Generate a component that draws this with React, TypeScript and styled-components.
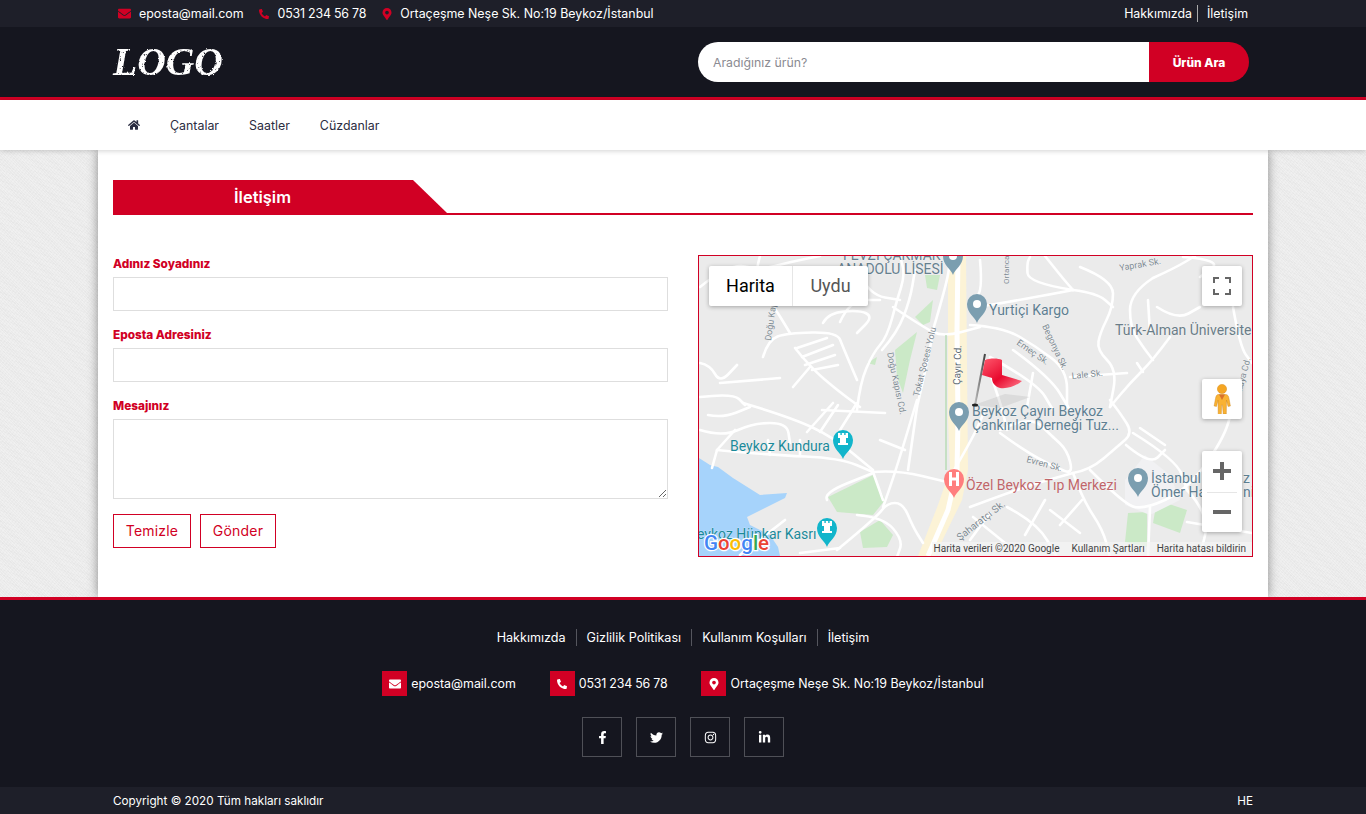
import React from "react";
import styled, { createGlobalStyle } from "styled-components";
import {
  FaEnvelope, FaPhone, FaMapMarkerAlt, FaHome, FaFacebookF, FaTwitter, FaInstagram, FaLinkedinIn,
} from "react-icons/fa";

const RED = "#d10024";
const DARK = "#15161f";
const BAR = "#1e1f29";
const FONT = `Inter, "Open Sans", "Liberation Sans", sans-serif`;

const Global = createGlobalStyle`
  * { box-sizing: border-box; }
  html, body { margin: 0; padding: 0; }
  body {
    font-family: ${FONT};
    background-color: #e9e9e9;
    background-image:
      repeating-linear-gradient(45deg, rgba(255,255,255,.22) 0 1px, transparent 1px 2px),
      repeating-linear-gradient(-52deg, rgba(255,255,255,.16) 0 1px, transparent 1px 3px),
      repeating-linear-gradient(20deg, rgba(0,0,0,.012) 0 1px, transparent 1px 5px);
  }
`;

const Wrap = styled.div`
  width: 1140px;
  margin: 0 auto;
  display: flex;
  align-items: center;
`;

const TopBar = styled.div`
  height: 27px;
  background: ${BAR};
  color: #fff;
  font-size: 12.4px;
  ${Wrap} { height: 27px; justify-content: space-between; padding: 0 5px; }
`;
const Contacts = styled.div`
  display: flex;
  align-items: center;
  gap: 15px;
`;
const Contact = styled.span<{ $gap?: number }>`
  display: flex;
  align-items: center;
  gap: ${(p) => p.$gap ?? 8}px;
  white-space: nowrap;
  svg { color: ${RED}; font-size: 12px; }
`;
const Digits = styled.span`
  letter-spacing: -0.2px;
`;
const TopLinks = styled.div`
  display: flex;
  align-items: center;
`;
const TopLink = styled.a<{ $sep?: boolean }>`
  color: #fff;
  padding: 0 ${(p) => (p.$sep ? "5px" : "0")} 0 ${(p) => (p.$sep ? "0" : "9px")};
  line-height: 17px;
  border-right: ${(p) => (p.$sep ? "1px solid #aaa" : "none")};
`;

const Header = styled.header`
  height: 73px;
  background: ${DARK};
  border-bottom: 3px solid ${RED};
  ${Wrap} { height: 70px; justify-content: space-between; padding-right: 4px; }
`;
const Logo = styled.div`
  font-family: "Liberation Serif", serif;
  font-style: italic;
  font-weight: 700;
  font-size: 39.5px;
  line-height: 1;
  color: #fff;
  filter: url(#rough);
  margin-top: 2px;
`;
const Search = styled.div`
  width: 551px;
  height: 40px;
  display: flex;
  border-radius: 20px;
  overflow: hidden;
`;
const SearchInput = styled.input`
  flex: 1;
  min-width: 0;
  border: 0;
  outline: 0;
  padding: 0 15px;
  font: 12.3px ${FONT};
  background: #fff;
  &::placeholder { color: #8b8b92; }
`;
const SearchBtn = styled.button`
  width: 100px;
  border: 0;
  background: ${RED};
  color: #fff;
  font: 800 12px ${FONT};
`;

const Nav = styled.nav`
  height: 50px;
  background: #fff;
  box-shadow: 0 1px 5px rgba(0,0,0,.18);
  position: relative;
  z-index: 2;
  ${Wrap} { height: 50px; padding-left: 15px; gap: 30px; }
`;
const NavItem = styled.a`
  font-size: 12.4px;
  color: #2b2d42;
  white-space: nowrap;
  display: flex;
  svg { font-size: 12px; color: #2b2d42; }
`;

const Main = styled.main`
  width: 1170px;
  height: 447px;
  margin: 0 auto;
  background: #fff;
  padding: 30px 15px 0;
  box-shadow: 0 0 10px rgba(0,0,0,.42);
`;
const TitleBar = styled.div`
  height: 35px;
  border-bottom: 2px solid ${RED};
  display: flex;
  margin-bottom: 40px;
`;
const Title = styled.h1`
  margin: 0 0 -2px;
  width: 334px;
  height: 35px;
  background: ${RED};
  color: #fff;
  font-size: 16.5px;
  font-weight: 600;
  line-height: 35px;
  padding-left: 121px;
  clip-path: polygon(0 0, 300px 0, 334px 33px, 334px 35px, 0 35px);
`;
const Columns = styled.div`
  display: flex;
  justify-content: space-between;
`;
const Form = styled.form`
  width: 555px;
  display: flex;
  flex-direction: column;
`;
const Label = styled.label`
  font: 800 11.8px/16px ${FONT};
  color: ${RED};
  padding-top: 1px;
  margin-bottom: 5px;
`;
const Field = styled.input`
  height: 34px;
  border: 1px solid #dedede;
  margin-bottom: 15px;
  outline: 0;
  background: #fff;
`;
const Area = styled.textarea`
  height: 80px;
  border: 1px solid #dedede;
  margin-bottom: 15px;
  outline: 0;
  resize: vertical;
  background: #fff;
`;
const Buttons = styled.div`
  display: flex;
  gap: 9px;
`;
const OutlineBtn = styled.button<{ $w: number }>`
  width: ${(p) => p.$w}px;
  height: 34px;
  border: 1px solid ${RED};
  background: #fff;
  color: ${RED};
  font: 14px ${FONT};
  letter-spacing: .2px;
  padding: 0 0 2px;
`;

const MapBox = styled.div`
  position: relative;
  width: 555px;
  height: 302px;
  border: 1px solid ${RED};
  overflow: hidden;
  background: #ebebeb;
  svg.map { display: block; }
`;
const MapType = styled.div`
  position: absolute;
  left: 10px;
  top: 10px;
  height: 40px;
  display: flex;
  background: #fff;
  border-radius: 2px;
  box-shadow: 0 1px 4px rgba(0,0,0,.3);
  font-family: Roboto, sans-serif;
  font-size: 18px;
`;
const MapTab = styled.div<{ $active?: boolean; $w: number }>`
  width: ${(p) => p.$w}px;
  display: flex;
  align-items: center;
  justify-content: center;
  padding-bottom: 2px;
  color: ${(p) => (p.$active ? "#000" : "#565656")};
  & + & { border-left: 1px solid #e6e6e6; }
`;
const MapCtl = styled.div<{ $top: number; $h?: number }>`
  position: absolute;
  left: 503px;
  top: ${(p) => p.$top}px;
  width: 40px;
  height: ${(p) => p.$h ?? 40}px;
  background: #fff;
  border-radius: 2px;
  box-shadow: 0 1px 4px rgba(0,0,0,.3);
  display: flex;
  flex-direction: column;
  align-items: center;
  justify-content: center;
`;
const ZoomHalf = styled.div`
  flex: 1;
  width: 100%;
  display: flex;
  align-items: center;
  justify-content: center;
  & + & { position: relative; }
  & + &::before {
    content: "";
    position: absolute;
    left: 5px; right: 5px; top: 0;
    height: 1px;
    background: #e6e6e6;
  }
`;
const Attribution = styled.div`
  position: absolute;
  right: 0;
  bottom: 0;
  height: 14px;
  width: 320px;
  display: flex;
  align-items: center;
  justify-content: flex-end;
  gap: 12px;
  padding-right: 6px;
  font: 10px/14px Roboto, sans-serif;
  color: #444;
  background: rgba(245,245,245,.7);
  white-space: nowrap;
`;

const Footer = styled.footer`
  height: 190px;
  background: ${DARK};
  border-top: 3px solid ${RED};
  color: #fff;
  display: flex;
  flex-direction: column;
  align-items: center;
`;
const FootLinks = styled.div`
  display: flex;
  margin-top: 29px;
  font-size: 12.6px;
`;
const FootLink = styled.a`
  padding: 0 10px;
  line-height: 17px;
  color: #fff;
  & + & { border-left: 1px solid #55565e; }
`;
const FootContacts = styled.div`
  display: flex;
  gap: 34px;
  margin-top: 25px;
  font-size: 12.4px;
`;
const FootContact = styled.div`
  display: flex;
  align-items: center;
  gap: 4px;
  white-space: nowrap;
`;
const IconSq = styled.span`
  width: 25px;
  height: 25px;
  background: ${RED};
  display: flex;
  align-items: center;
  justify-content: center;
  font-size: 12px;
`;
const Socials = styled.div`
  display: flex;
  gap: 14px;
  margin-top: 21px;
`;
const Social = styled.a`
  width: 40px;
  height: 40px;
  border: 1px solid #4f5057;
  display: flex;
  align-items: center;
  justify-content: center;
  color: #fff;
  font-size: 13px;
`;
const Copy = styled.div`
  height: 27px;
  background: ${BAR};
  color: #fff;
  font-size: 11.7px;
  ${Wrap} { height: 27px; justify-content: space-between; }
`;

const Pin = ({ x, y, c, glyph }: { x: number; y: number; c: string; glyph?: "tower" | "h" }) => (
  <g transform={`translate(${x} ${y})`}>
    <path d="M0 0C-2-6-10-10-10-19A10 10 0 1 1 10-19C10-10 2-6 0 0Z" fill={c} />
    {!glyph && <circle cx="0" cy="-19" r="4" fill="#fff" />}
    {glyph === "tower" && <path d="M-5-14h10v-2h-2v-5h2v-5h-2.4v2h-1.4v-2h-2.4v2h-1.4v-2H-5v5h2v5h-2z" fill="#fff" />}
    {glyph === "h" && <path d="M-5-26h3v5.5h4V-26h3v14H2v-5.5h-4V-12h-3z" fill="#fff" />}
  </g>
);

const ROADS: number[][] = [
  [763,357,768,340,787,333,837,332,843,347,857,380],
  [797,348,827,338],[802,357,833,345],[805,365,835,355],[812,370,838,365],
  [795,348,810,367,837,390,860,407],[793,387,810,367],
  [857,410,860,383,873,353,887,337,897,300,905,275,900,256],[882,350,897,333,910,300,915,270],
  [893,307,923,327,943,337,980,327],[933,330,947,283,950,260],[917,407,930,350,933,330],
  [700,287,730,263,760,270,790,262,820,256],[700,363,710,365,720,383,737,365],
  [720,383,757,380,780,378],[700,397,733,393,745,405],
  [823,323,828,313,860,310,873,317,857,333],[840,322,850,300,880,300],
  [760,256,752,285,770,300,790,333],[860,275,870,295,900,300],
  [1073,290,1028,283,1027,263,1030,257],[980,260,983,293,970,300],[1073,290,1020,300,977,307],
  [1073,290,1097,293,1113,307],[970,325,1003,327,1037,347,1067,370,1067,407],
  [1080,267,1113,280,1113,307,1100,333,1097,350,1117,370,1110,407],
  [1153,278,1130,293,1130,327,1143,347,1153,360],[1170,337,1153,360,1130,383,1110,407],
  [1157,307,1177,320,1200,307],[1148,300,1150,333],[1233,307,1240,347,1252,363],
  [1183,257,1223,260,1200,277],[1013,350,1050,377,1070,410],[990,357,1037,383,1053,410],
  [1033,373,1027,407],[1070,377,1127,373],[1137,363,1143,372],[1153,278,1175,268,1195,256],
  [1045,256,1060,275,1073,290],[1000,430,1030,415,1053,437],[985,360,1000,400,1007,430],
  [1000,433,1023,450,1060,470,1073,473,1067,450,1053,437],
  [1073,473,1090,470,1117,447,1133,433,1120,413,1110,400],
  [970,507,1023,487,1073,473],
  [1090,470,1123,503,1143,510,1187,490,1223,440,1233,407],
  [1133,433,1177,460,1187,490],[1073,473,1083,500,1103,530,1110,557],
  [1007,507,1037,523,1057,557],[1050,510,1080,533],[1150,507,1148,557],[1187,522,1252,533],
  [973,517,1010,547],[970,540,990,513],[1126,445,1150,465,1165,450],[1140,428,1165,445],
  [1187,490,1210,515,1200,556],[1082,500,1060,525],[1025,535,1045,500],
  [700,430,723,437,753,423,787,423,790,443],[708,415,723,418,750,407],
  [717,450,770,455,840,458,873,472],[717,450,712,468],[717,450,735,430],
  [743,403,790,417,833,437,873,470],[807,432,833,403],[820,432,838,405],[840,430,857,403],
  [822,410,885,413],[873,472,883,500],[873,472,897,470,947,482],[883,507,893,480,917,400],
  [827,500,823,493,873,473],[837,550,877,517,887,503,903,503,913,527,923,543],
  [857,515,883,517,903,540,897,557],[947,482,972,440,985,410],
  [917,407,908,470],[770,455,768,440],[800,455,800,440],[740,555,785,520],
  [800,553,840,548],[880,440,905,450],
];

const smooth = (p: number[]) => {
  if (p.length <= 4) return `M${p[0]} ${p[1]}L${p[2]} ${p[3]}`;
  let d = `M${p[0]} ${p[1]}`;
  for (let i = 2; i < p.length - 2; i += 2) {
    const mx = (p[i] + p[i + 2]) / 2;
    const my = (p[i + 1] + p[i + 3]) / 2;
    d += `Q${p[i]} ${p[i + 1]} ${mx} ${my}`;
  }
  return `${d}L${p[p.length - 2]} ${p[p.length - 1]}`;
};

const LABELS: { x: number; y: number; t: string; c: string; s: number; r?: number }[] = [
  { x: 843, y: 260, t: "FEVZİ ÇAKMAK", c: "#66808f", s: 14 },
  { x: 837, y: 274, t: "ANADOLU LİSESİ", c: "#66808f", s: 14 },
  { x: 989, y: 315, t: "Yurtiçi Kargo", c: "#5e7f92", s: 14 },
  { x: 1115, y: 335, t: "Türk-Alman Üniversite", c: "#6a7d88", s: 14 },
  { x: 972, y: 416, t: "Beykoz Çayırı Beykoz", c: "#5e7f92", s: 14 },
  { x: 972, y: 430, t: "Çankırılar Derneği Tuz...", c: "#5e7f92", s: 14 },
  { x: 730, y: 451, t: "Beykoz Kundura", c: "#1b8a9a", s: 14 },
  { x: 966, y: 490, t: "Özel Beykoz Tıp Merkezi", c: "#c0666a", s: 14 },
  { x: 1151, y: 483, t: "İstanbul", c: "#5e7f92", s: 14 },
  { x: 1151, y: 497, t: "Ömer Ha", c: "#5e7f92", s: 14 },
  { x: 1243, y: 483, t: "z", c: "#5e7f92", s: 14 },
  { x: 1243, y: 497, t: "ni", c: "#5e7f92", s: 14 },
  { x: 697, y: 539, t: "eykoz Hünkar Kasrı", c: "#1b8a9a", s: 14 },
  { x: 1120, y: 271, t: "Yaprak Sk.", c: "#7d8a92", s: 9, r: -10 },
  { x: 1016, y: 344, t: "Emeç Sk.", c: "#7d8a92", s: 9, r: 35 },
  { x: 1042, y: 326, t: "Begonya Sk.", c: "#7d8a92", s: 9, r: 65 },
  { x: 1072, y: 379, t: "Lale Sk.", c: "#7d8a92", s: 9, r: -6 },
  { x: 1026, y: 462, t: "Evren Sk.", c: "#7d8a92", s: 9, r: 15 },
  { x: 960, y: 541, t: "Şaharatçı Sk.", c: "#7d8a92", s: 10, r: -38 },
  { x: 960, y: 385, t: "Çayır Cd.", c: "#5d6a72", s: 10, r: -88 },
  { x: 919, y: 397, t: "Tokat Şosesi Yolu", c: "#7d8a92", s: 9, r: -76 },
  { x: 887, y: 353, t: "Doğu Kapısı Cd.", c: "#7d8a92", s: 9, r: 78 },
  { x: 771, y: 341, t: "Doğu Kapı", c: "#7d8a92", s: 9, r: -82 },
  { x: 1009, y: 284, t: "Ortanca", c: "#7d8a92", s: 8, r: -90 },
  { x: 1238, y: 406, t: "Çıkıkaya Cd.", c: "#7d8a92", s: 9, r: -75 },
];

const MapArt = () => (
  <svg className="map" width="553" height="300" viewBox="699 256 553 300">
    <defs>
      <linearGradient id="flag" x1="0" y1="0" x2="1" y2="1">
        <stop offset="0" stopColor="#ff5a6e" />
        <stop offset=".55" stopColor="#e8092e" />
        <stop offset="1" stopColor="#ff7d8d" />
      </linearGradient>
      <linearGradient id="pole" x1="0" y1="0" x2="1" y2="0">
        <stop offset="0" stopColor="#bbb" />
        <stop offset="1" stopColor="#444" />
      </linearGradient>
    </defs>
    <rect x="699" y="256" width="553" height="300" fill="#ebebeb" />
    <path d="M699 458L710 465L718 467L733 478L760 495L787 493L785 498L747 517L750 525L770 535L778 547L780 556H699Z" fill="#a6d3fb" />
    <g fill="#cbe9c7">
      <path d="M828 497L873 475L885 500L873 515L837 512Z" />
      <path d="M860 532L880 520L893 535L887 547L863 548Z" />
      <path d="M895 350L917 332L910 360L903 393L897 377Z" />
      <path d="M915 317L933 300L930 322L923 325Z" />
      <path d="M925 275L940 275L937 290L927 288Z" />
      <path d="M867 363L877 357L875 365Z" />
      <path d="M1128 513L1147 512L1147 547L1125 542Z" />
      <path d="M1157 500L1187 510L1180 533L1153 523Z" />
    </g>
    <path d="M948 256H966L968 470L962 500L945 535L935 556H918L938 505L950 470L948 420Z" fill="#fcf3d6" />
    <path d="M1125 480L1145 455L1170 475L1180 500L1150 515L1125 505Z" fill="#f1f1f3" />
    <g fill="none" stroke="#fff" strokeWidth="2.6" strokeLinecap="round" strokeLinejoin="round">
      {ROADS.map((p) => <path key={p.join()} d={smooth(p)} />)}
    </g>
    <path d="M958 256L957 330L958 420L957 470L948 510L928 556" fill="none" stroke="#fff" strokeWidth="5" />
    <path d="M946 335L946 470" fill="none" stroke="#9fd49b" strokeWidth="1" />
    <g fontFamily="Roboto, sans-serif">
      {LABELS.map((l) => (
        <text key={l.t} x={l.x} y={l.y} fill={l.c} fontSize={l.s}
          stroke="#fff" strokeOpacity=".6" strokeWidth=".6" paintOrder="stroke"
          transform={l.r ? `rotate(${l.r} ${l.x} ${l.y})` : undefined}>{l.t}</text>
      ))}
    </g>
    <Pin x={953} y={275} c="#7b9eb0" />
    <Pin x={977} y={323} c="#7b9eb0" />
    <Pin x={959} y={431} c="#7b9eb0" />
    <Pin x={1138} y={497} c="#7b9eb0" />
    <Pin x={843} y={459} c="#12b5cb" glyph="tower" />
    <Pin x={827} y={547} c="#12b5cb" glyph="tower" />
    <Pin x={954} y={498} c="#ff7e7e" glyph="h" />
    <path d="M974 405L1005 394L1030 397L1000 408Z" fill="#999" opacity=".2" />
    <path d="M985 354L975 405" stroke="url(#pole)" strokeWidth="2" />
    <ellipse cx="975" cy="405" rx="3" ry="1.5" fill="#222" />
    <path d="M985 360C990 358 998 358 1002 360L1002 375L1022 381C1016 386 1008 389 1000 388C994 386 992 382 992 378L982 375Z" fill="url(#flag)" />
    <text x="704" y="550" fontFamily="Roboto, 'Liberation Sans', sans-serif" fontWeight="500" fontSize="20.5" stroke="#fff" strokeWidth="2.5" paintOrder="stroke">
      <tspan fill="#4285f4">G</tspan><tspan fill="#ea4335">o</tspan><tspan fill="#fbbc05">o</tspan><tspan fill="#4285f4">g</tspan><tspan fill="#34a853">l</tspan><tspan fill="#ea4335">e</tspan>
    </text>
  </svg>
);

const RoughFilter = () => (
  <svg width="0" height="0" style={{ position: "absolute" }}>
    <filter id="rough" x="-5%" y="-5%" width="110%" height="110%">
      <feTurbulence type="fractalNoise" baseFrequency=".45" numOctaves="2" seed="4" result="n" />
      <feDisplacementMap in="SourceGraphic" in2="n" scale="2.2" result="d" />
      <feColorMatrix in="n" type="matrix" values="0 0 0 0 1  0 0 0 0 1  0 0 0 0 1  6 0 0 0 -1.1" result="m" />
      <feComposite in="d" in2="m" operator="in" />
    </filter>
  </svg>
);

export default function App() {
  return (
    <>
      <Global />
      <RoughFilter />
      <TopBar>
        <Wrap>
          <Contacts>
            <Contact><FaEnvelope size={13} />eposta@mail.com</Contact>
            <Contact $gap={9}><FaPhone style={{ transform: "scaleX(-1)" }} size={10} /><Digits>0531 234 56 78</Digits></Contact>
            <Contact $gap={7}><FaMapMarkerAlt width={8} height={11} />Ortaçeşme Neşe Sk. No:19 Beykoz/İstanbul</Contact>
          </Contacts>
          <TopLinks>
            <TopLink $sep>Hakkımızda</TopLink>
            <TopLink>İletişim</TopLink>
          </TopLinks>
        </Wrap>
      </TopBar>
      <Header>
        <Wrap>
          <Logo>LOGO</Logo>
          <Search>
            <SearchInput placeholder="Aradığınız ürün?" />
            <SearchBtn>Ürün Ara</SearchBtn>
          </Search>
        </Wrap>
      </Header>
      <Nav>
        <Wrap>
          <NavItem><FaHome /></NavItem>
          <NavItem>Çantalar</NavItem>
          <NavItem>Saatler</NavItem>
          <NavItem>Cüzdanlar</NavItem>
        </Wrap>
      </Nav>
      <Main>
        <TitleBar><Title>İletişim</Title></TitleBar>
        <Columns>
          <Form>
            <Label>Adınız Soyadınız</Label>
            <Field />
            <Label>Eposta Adresiniz</Label>
            <Field />
            <Label>Mesajınız</Label>
            <Area />
            <Buttons>
              <OutlineBtn type="button" $w={78}>Temizle</OutlineBtn>
              <OutlineBtn type="button" $w={76}>Gönder</OutlineBtn>
            </Buttons>
          </Form>
          <MapBox>
            <MapArt />
            <MapType>
              <MapTab $active $w={83}>Harita</MapTab>
              <MapTab $w={76}>Uydu</MapTab>
            </MapType>
            <MapCtl $top={10}>
              <svg width="18" height="18" viewBox="0 0 18 18" fill="#666">
                <path d="M0 0h6v2H2v4H0zM12 0h6v6h-2V2h-4zM0 12h2v4h4v2H0zM16 12h2v6h-6v-2h4z" />
              </svg>
            </MapCtl>
            <MapCtl $top={123}>
              <svg width="18" height="30" viewBox="0 0 18 30">
                <circle cx="9" cy="5" r="4.6" fill="#f5a623" stroke="#d98a14" strokeWidth=".5" />
                <path d="M5 10.500h8c2 .4 2.600 1.600 3 4l1.400 7.500-2.400.4-1.500-6.200-.2 13.800h-3.100L9.400 21H8.600l-.3 9.500H5.200L5 16.200l-1.500 6.200-2.400-.4 1.400-7.500c.4-2.400 1-3.600 2.500-4z" fill="#f9b233" stroke="#c77e14" strokeWidth=".4" />
                <path d="M6 10.500h6l-3 5.500z" fill="#d9722a" />
              </svg>
            </MapCtl>
            <MapCtl $top={195} $h={81}>
              <ZoomHalf>
                <svg width="18" height="18" viewBox="0 0 18 18"><path d="M7 0h4v7h7v4h-7v7H7v-7H0V7h7z" fill="#666" /></svg>
              </ZoomHalf>
              <ZoomHalf>
                <svg width="18" height="4" viewBox="0 0 18 4"><rect width="18" height="4" fill="#666" /></svg>
              </ZoomHalf>
            </MapCtl>
            <Attribution>
              <span>Harita verileri ©2020 Google</span>
              <span>Kullanım Şartları</span>
              <span>Harita hatası bildirin</span>
            </Attribution>
          </MapBox>
        </Columns>
      </Main>
      <Footer>
        <FootLinks>
          <FootLink>Hakkımızda</FootLink>
          <FootLink>Gizlilik Politikası</FootLink>
          <FootLink>Kullanım Koşulları</FootLink>
          <FootLink>İletişim</FootLink>
        </FootLinks>
        <FootContacts>
          <FootContact><IconSq><FaEnvelope /></IconSq>eposta@mail.com</FootContact>
          <FootContact><IconSq><FaPhone style={{ transform: "scaleX(-1)" }} size={10} /></IconSq><Digits>0531 234 56 78</Digits></FootContact>
          <FootContact><IconSq><FaMapMarkerAlt /></IconSq>Ortaçeşme Neşe Sk. No:19 Beykoz/İstanbul</FootContact>
        </FootContacts>
        <Socials>
          <Social><FaFacebookF /></Social>
          <Social><FaTwitter /></Social>
          <Social><FaInstagram /></Social>
          <Social><FaLinkedinIn /></Social>
        </Socials>
      </Footer>
      <Copy>
        <Wrap>
          <span>Copyright © 2020 Tüm hakları saklıdır</span>
          <span>HE</span>
        </Wrap>
      </Copy>
    </>
  );
}
